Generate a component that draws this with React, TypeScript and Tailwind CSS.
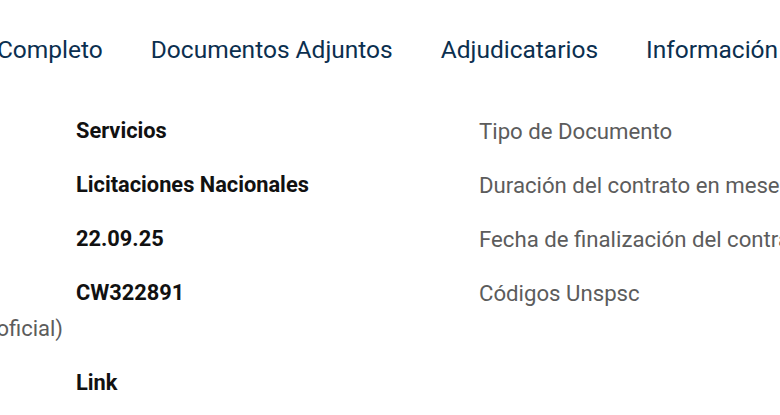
import React from "react";

const leftRows: { label: React.ReactNode; value: string }[] = [
  { label: "Categoría", value: "Servicios" },
  { label: "Procedimiento", value: "Licitaciones Nacionales" },
  { label: "Publicado", value: "22.09.25" },
  {
    label: (
      <>
        <span className="block">Referencia</span>
        <span className="block text-right">(número oficial)</span>
      </>
    ),
    value: "CW322891",
  },
  { label: "Fuente", value: "Link" },
];

const rightRows = [
  { label: "Tipo de Documento", value: "Aviso de licitación" },
  { label: "Duración del contrato en meses", value: "12" },
  { label: "Fecha de finalización del contrato", value: "31.12.25" },
  { label: "Códigos Unspsc", value: "72000000" },
];

const tabs = ["Aviso Completo", "Documentos Adjuntos", "Adjudicatarios", "Información"];

export default function App() {
  return (
    <div className="w-[780px] h-[415px] overflow-hidden bg-white font-['Roboto',sans-serif]">
      <nav className="flex gap-[48px] -ml-[69px] pt-[32px] whitespace-nowrap">
        {tabs.map(t => (
          <a key={t} className="text-[24.5px] leading-[36px] text-[#0b2f4f]">
            {t}
          </a>
        ))}
      </nav>

      <div className="flex -ml-[187px] mt-[45px] whitespace-nowrap">
        <dl className="w-[666px] shrink-0 grid grid-cols-[250px_1fr] gap-x-[13px] gap-y-[18px] text-[22px] leading-[36px]">
          {leftRows.map((r, i) => (
            <React.Fragment key={i}>
              <dt className="text-[#5c5c5c]">{r.label}</dt>
              <dd className="font-bold text-[21.8px] text-[#111111]">{r.value}</dd>
            </React.Fragment>
          ))}
        </dl>
        <dl className="shrink-0 grid grid-cols-[360px_1fr] gap-x-[13px] gap-y-[18px] text-[22.2px] leading-[36px] content-start">
          {rightRows.map((r, i) => (
            <React.Fragment key={i}>
              <dt className="text-[#5c5c5c]">{r.label}</dt>
              <dd className="font-bold text-[#111111]">{r.value}</dd>
            </React.Fragment>
          ))}
        </dl>
      </div>
    </div>
  );
}
